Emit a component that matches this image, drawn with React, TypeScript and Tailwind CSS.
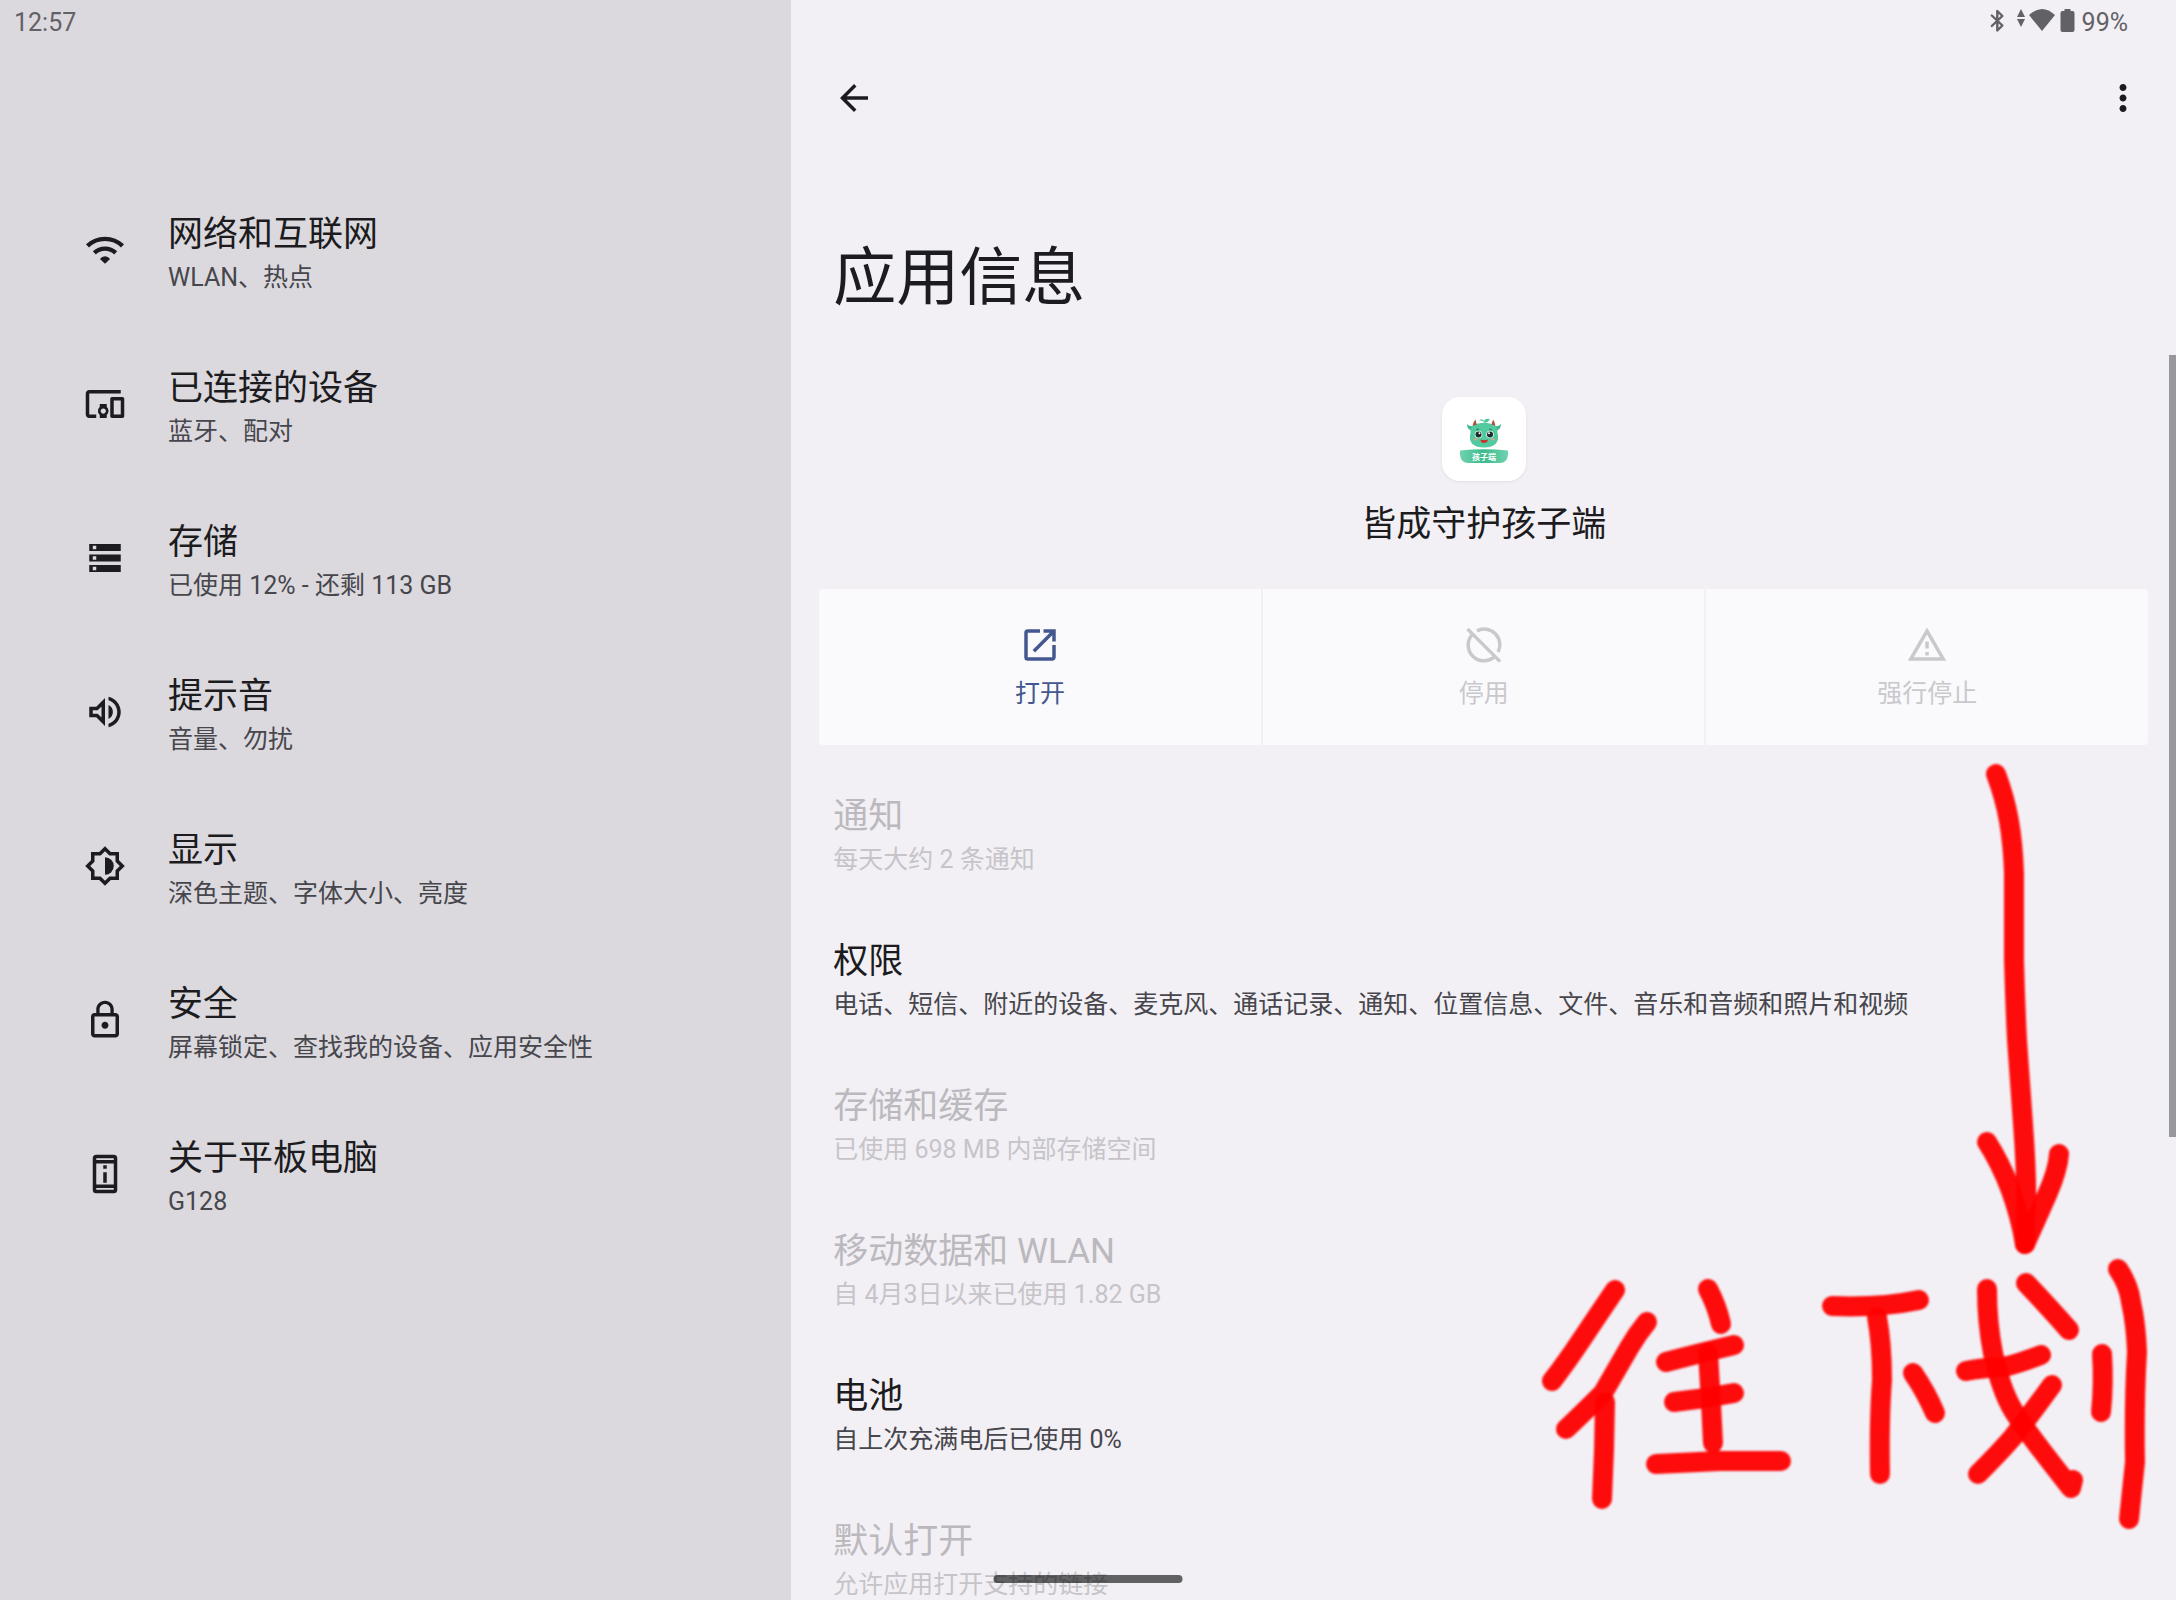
import { ReactNode } from "react";
import { MdArrowBack, MdDevicesOther, MdLockOutline, MdMoreVert, MdOpenInNew, MdOutlineVolumeUp, MdOutlineWarningAmber } from "react-icons/md";

const WifiIcon = () => (
	<svg viewBox="0 0 24 24" width="1em" height="1em" fill="none" stroke="currentColor" strokeWidth="2.5">
		<path d="M2 9.65A14.4 14.4 0 0 1 22 9.65" />
		<path d="M5.9 13.6A8.9 8.9 0 0 1 18.1 13.6" />
		<path d="M12 19.8L9.1 17.2Q10.2 15.6 12 15.6T14.9 17.2z" fill="currentColor" stroke="none" />
	</svg>
)

const StorageIcon = () => (
	<svg viewBox="0 0 24 24" width="1em" height="1em" fill="currentColor" fillRule="evenodd">
		<path d="M3 4h18v4H3zM5 5v2h2V5zM3 10h18v4H3zM5 11v2h2v-2zM3 16h18v4H3zM5 17v2h2v-2z" />
	</svg>
)

const BrightnessIcon = () => (
	<svg viewBox="0 0 24 24" width="1em" height="1em" fill="currentColor">
		<path d="M20 8.69V4h-4.69L12 .69 8.69 4H4v4.69L.69 12 4 15.31V20h4.69L12 23.31 15.31 20H20v-4.69L23.31 12 20 8.69zm-2 5.79V18h-3.52L12 20.48 9.52 18H6v-3.52L3.52 12 6 9.52V6h3.52L12 3.52 14.48 6H18v3.52L20.48 12 18 14.48z" />
		<path d="M12 7v10a5 5 0 0 0 0-10z" />
	</svg>
)

const DeviceIcon = () => (
	<svg viewBox="0 0 24 24" width="1em" height="1em" fill="currentColor">
		<rect x="6" y="2" width="12" height="20" rx="1" fill="none" stroke="currentColor" strokeWidth="2" />
		<path d="M6 4h12v2H6zM6 18h12v2H6zM11 7h2v2h-2zM11 11h2v6h-2z" />
	</svg>
)

const DisableIcon = () => (
	<svg viewBox="0 0 24 24" width="1em" height="1em" fill="none" stroke="currentColor" strokeWidth="2">
		<path d="M5.2 6.1A9 9 0 0 0 17.9 18.8M8 3.9A9 9 0 0 1 20.1 16M2.6 2.9L21.2 21.5" />
	</svg>
)

const Mascot = () => (
	<svg viewBox="0 0 84 84" className="h-full w-full" role="img" aria-label="孩子端">
		<defs>
			<linearGradient id="ribbon" x1="0" y1="0" x2="1" y2="0">
				<stop offset="0" stopColor="#6fd3ae" />
				<stop offset=".5" stopColor="#3dba8e" />
				<stop offset="1" stopColor="#6fd3ae" />
			</linearGradient>
		</defs>
		<path d="M42 26Q42 23 37 23.500Q40 21 42 24Q44 20.500 48 22.500Q46 25.500 42 26" fill="#4cc79c" />
		<path d="M33 29Q27 30 25 27Q25 34 32 34zM51 29Q57 30 59 27Q59 34 52 34z" fill="#3fb98d" />
		<path d="M42 26C50 26 56 28 55.500 36C58 45 53 50.500 42 50.500S26 45 28.500 36C28 28 34 26 42 26z" fill="#52ca9f" />
		<path d="M30.500 29Q31 25 33.500 22.500Q34 26 35 27.500zM53.500 29Q53 25 51 22.500Q50 26 49.500 27.500z" fill="#a8523d" />
		<path d="M34 33l3-1M50 33l-3-1" stroke="#2c6b55" />
		<circle cx="36.500" cy="37.500" r="3.800" fill="#dff5ee" />
		<circle cx="48" cy="37.500" r="3.800" fill="#dff5ee" />
		<circle cx="36.500" cy="37.500" r="3" fill="#1d2b2b" />
		<circle cx="48" cy="37.500" r="3" fill="#1d2b2b" />
		<circle cx="37.500" cy="36.300" r="1" fill="#fff" />
		<circle cx="47" cy="36.300" r="1" fill="#fff" />
		<ellipse cx="33.500" cy="42.500" rx="2" ry="1" fill="#e2a183" />
		<ellipse cx="51" cy="42.500" rx="2" ry="1" fill="#e2a183" />
		<path d="M38.500 42.500Q42 43.500 46 42.500Q45.500 46 42 46T38.500 42.500z" fill="#c3362c" />
		<path d="M18 53.500Q42 51 66 53.500V58Q65 66 58 66H26Q19 66 18 58z" fill="url(#ribbon)" />
		<text x="42" y="63" textAnchor="middle" fontSize="8" fontWeight="700" fill="#fff">孩子端</text>
	</svg>
)

// hand drawn strokes: arrow first, then the characters
const strokes = [
	"M496 34Q505 58 509 81T514 133L514 220Q515 260 517 300L523 384Q527 437 526 470L525 504",
	"M487 402Q515 446 525 504",
	"M559 414Q558 430 547 455T525 504",
	"M115 550Q98 575 82 599T52 641",
	"M147 582Q137 594 129 608L103 653Q80 676 66 689",
	"M105 662L104 710L102 759",
	"M208 549Q217 566 221 584",
	"M166 622Q200 613 234 605",
	"M208 613L211 663L213 703",
	"M174 662Q204 659 234 653",
	"M156 724L220 721L281 721",
	"M332 566Q380 568 419 560",
	"M377 577Q382 604 382 640Q379 680 380 734",
	"M413 633Q426 652 435 673",
	"M487 549Q487 582 493 613Q501 650 513 670T571 748L573 740",
	"M466 631Q480 628 504 627Q520 623 541 615",
	"M526 543Q546 564 569 590",
	"M552 645Q534 670 513 697Q500 712 478 734",
	"M602 614Q604 643 601 672",
	"M618 529Q629 545 631 562Q636 584 637 612Q634 660 635 722Q632 750 629 779",
];

const categories: { icon: ReactNode; title: string; summary: string }[] = [
	{ icon: <WifiIcon />, title: "网络和互联网", summary: "WLAN、热点" },
	{ icon: <MdDevicesOther />, title: "已连接的设备", summary: "蓝牙、配对" },
	{ icon: <StorageIcon />, title: "存储", summary: "已使用 12% - 还剩 113 GB" },
	{ icon: <MdOutlineVolumeUp />, title: "提示音", summary: "音量、勿扰" },
	{ icon: <BrightnessIcon />, title: "显示", summary: "深色主题、字体大小、亮度" },
	{ icon: <MdLockOutline />, title: "安全", summary: "屏幕锁定、查找我的设备、应用安全性" },
	{ icon: <DeviceIcon />, title: "关于平板电脑", summary: "G128" },
];

const actions = [
	{ icon: <MdOpenInNew />, label: "打开", disabled: false },
	{ icon: <DisableIcon />, label: "停用", disabled: true },
	{ icon: <MdOutlineWarningAmber />, label: "强行停止", disabled: true },
];

const preferences = [
	{ title: "通知", summary: "每天大约 2 条通知", disabled: true },
	{ title: "权限", summary: "电话、短信、附近的设备、麦克风、通话记录、通知、位置信息、文件、音乐和音频和照片和视频", disabled: false },
	{ title: "存储和缓存", summary: "已使用 698 MB 内部存储空间", disabled: true },
	{ title: "移动数据和 WLAN", summary: "自 4月3日以来已使用 1.82 GB", disabled: true },
	{ title: "电池", summary: "自上次充满电后已使用 0%", disabled: false },
	{ title: "默认打开", summary: "允许应用打开支持的链接", disabled: true },
];

const StatusIcons = () => (
	<svg viewBox="0 0 88 24" className="mb-1 h-6 w-[88px]" fill="#626166">
		<path d="M1.800 6.500L12.400 16.500L7.300 21.500V2L12.400 7L1.800 17" fill="none" stroke="#626166" strokeWidth="2.4" strokeLinejoin="round" strokeLinecap="round" />
		<path d="M31 0l4 8h-8zM31 18l4-8h-8z" />
		<path d="M52 22L39 6Q52-6 65 6z" />
		<path d="M74.500 0h6v2h2q2 0 2 2v17q0 2-2 2H72.500q-2 0-2-2V4q0-2 2-2h2z" />
	</svg>
)

function App() {
	return (
		<div lang="zh-CN" className="relative grid h-screen grid-cols-[4fr_7fr] overflow-hidden bg-[#f2f0f5] font-['Roboto','Noto_Sans_CJK_SC',sans-serif] text-[#1c1b20]">
			<aside className="bg-[#dbd9de]">
				<div className="flex h-[46px] items-center px-[14px] text-[25px] text-[#626166]">12:57</div>

				<nav className="flex flex-col gap-[60px] pt-[157px]">
					{categories.map((item) => (
						<a key={item.title} href="#" className="flex items-center gap-[42px] px-[84px]">
							<span className="text-[42px]">{item.icon}</span>
							<span className="flex flex-col pt-2">
								<span className="text-[35px] leading-[48px]">{item.title}</span>
								<span className="text-[25px] leading-[38px] text-[#46464c]">{item.summary}</span>
							</span>
						</a>
					))}
				</nav>
			</aside>

			<main className="relative flex min-w-0 flex-col overflow-hidden px-7">
				<div className="flex h-[46px] shrink-0 items-center justify-end gap-1 pr-5 text-[25px] text-[#626166]">
					<StatusIcons />
					<span>99%</span>
				</div>

				<header className="flex h-[104px] shrink-0 items-center justify-between pl-[14px] pr-1 text-[42px]">
					<button aria-label="返回"><MdArrowBack /></button>
					<button aria-label="更多选项"><MdMoreVert /></button>
				</header>

				<h1 className="mt-[86px] pl-[14px] text-[63px] leading-[84px]">应用信息</h1>

				<div className="mt-[77px] flex flex-col items-center gap-5">
					<div className="h-[84px] w-[84px] rounded-[18px] bg-white shadow-[0_1px_3px_rgba(0,0,0,0.08)]">
						<Mascot />
					</div>
					<h2 className="text-[35px] leading-[48px]">皆成守护孩子端</h2>
				</div>

				<div className="mt-10 grid shrink-0 grid-cols-3 gap-[2px] overflow-hidden rounded-[4px]">
					{actions.map((action) => (
						<button
							key={action.label}
							disabled={action.disabled}
							className="flex h-[156px] flex-col items-center justify-center gap-2 bg-[#fafafc] pt-1 text-[#44588f] disabled:text-[#c9c8cc]"
						>
							<span className="text-[42px]">{action.icon}</span>
							<span className="text-[25px] leading-[40px]">{action.label}</span>
						</button>
					))}
				</div>

				<div className="mt-12 flex flex-col gap-[59px]">
					{preferences.map((item) => (
						<button
							key={item.title}
							disabled={item.disabled}
							className="group flex flex-col pl-[14px] text-left disabled:text-[#bbb9be]"
						>
							<span className="text-[35px] leading-[48px]">{item.title}</span>
							<span className="text-[25px] leading-[38px] text-[#46464c] group-disabled:text-[#c6c4c9]">{item.summary}</span>
						</button>
					))}
				</div>

				{/* scroll thumb */}
				<div className="absolute right-0 top-[355px] h-[782px] w-[7px] bg-[#98979d]" />

				<svg viewBox="0 0 676 820" className="pointer-events-none absolute right-0 top-[740px] h-[820px] w-[676px]" fill="none" stroke="#ff0000" strokeOpacity="0.95" strokeWidth="20" strokeLinecap="round" strokeLinejoin="round">
					<filter id="soft" x="0" y="0" width="676" height="820" filterUnits="userSpaceOnUse">
						<feGaussianBlur stdDeviation="1.2" />
					</filter>
					<g filter="url(#soft)">
						{strokes.map((d) => <path key={d} d={d} />)}
					</g>
				</svg>
			</main>

			{/* gesture bar */}
			<div className="absolute bottom-[17px] left-1/2 h-2 w-[189px] -translate-x-1/2 rounded-full bg-black/60" />
		</div>
	)
}

export default App
